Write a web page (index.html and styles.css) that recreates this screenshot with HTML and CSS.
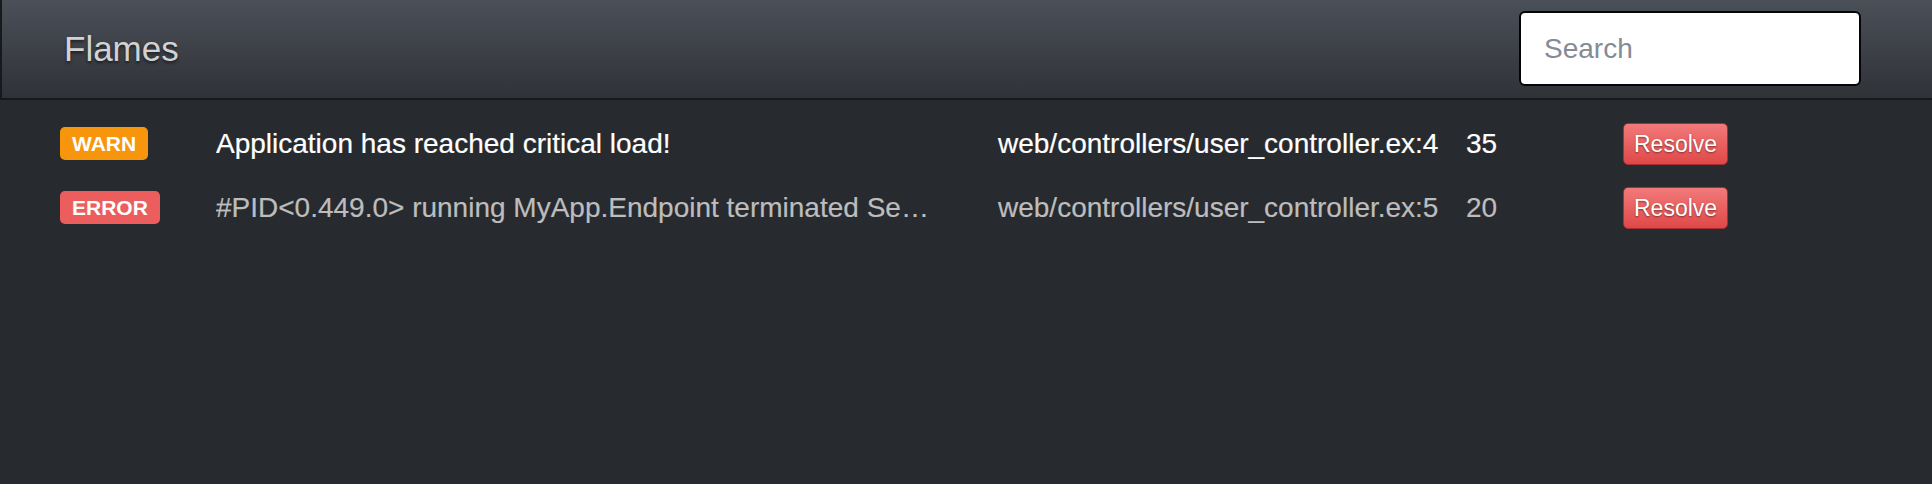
FILE: index.html
```html
<!DOCTYPE html>
<html>
<head>
<meta charset="utf-8">
<title>Flames</title>
<link rel="stylesheet" href="styles.css">
</head>
<body>
<header class="topbar">
  <div class="brand">Flames</div>
  <input class="search" type="text" placeholder="Search">
</header>
<main class="list">
  <div class="row row-active">
    <div class="cell"><span class="label label-warn">WARN</span></div>
    <div class="cell msg">Application has reached critical load!</div>
    <div class="cell">web/controllers/user_controller.ex:4</div>
    <div class="cell">35</div>
    <div class="cell"><button class="btn-resolve">Resolve</button></div>
  </div>
  <div class="row row-muted">
    <div class="cell"><span class="label label-error">ERROR</span></div>
    <div class="cell msg">#PID&lt;0.449.0&gt; running MyApp.Endpoint terminated Se…</div>
    <div class="cell">web/controllers/user_controller.ex:5</div>
    <div class="cell">20</div>
    <div class="cell"><button class="btn-resolve">Resolve</button></div>
  </div>
</main>
</body>
</html>
```
FILE: styles.css
```css
html, body {
  margin: 0;
  padding: 0;
  background: #272a2f;
  font-family: "Liberation Sans", Arial, Helvetica, sans-serif;
  height: 100%;
}

.topbar {
  height: 98px;
  display: flex;
  align-items: center;
  justify-content: space-between;
  background: linear-gradient(to bottom, #4b4f58 0%, #2f3237 100%);
  border-left: 2px solid #17191c;
  border-bottom: 2px solid #17191c;
  padding: 0 71px 0 62px;
}

.brand {
  font-size: 35px;
  color: #d2d2d2;
  text-shadow: 0 2px 3px rgba(0, 0, 0, 0.55);
  line-height: 1;
  margin-top: -2px;
}

.search {
  box-sizing: border-box;
  width: 342px;
  height: 75px;
  border: 2px solid #050505;
  border-radius: 6px;
  background: #fff;
  padding: 0 23px;
  font-family: "Liberation Sans", Arial, Helvetica, sans-serif;
  font-size: 28px;
  color: #333;
  outline: none;
  margin-bottom: 1px;
}

.search::placeholder {
  color: #858b92;
}

.list {
  padding: 12px 0 0 60px;
}

.row {
  display: grid;
  grid-template-columns: 156px 782px 468px 157px auto;
  align-items: center;
  height: 64px;
  font-size: 28px;
  -webkit-text-stroke: 0.2px currentColor;
}

.row-active {
  color: #ffffff;
}

.row-muted {
  color: #bdbdbd;
}

.cell {
  white-space: nowrap;
}

.msg {
  overflow: hidden;
}

.label {
  display: inline-block;
  font-size: 21px;
  font-weight: bold;
  color: #fff;
  line-height: 1;
  padding: 6px 12px 6px;
  border-radius: 5px;
  vertical-align: middle;
  margin-top: -4px;
  -webkit-text-stroke: 0;
}

.label-warn {
  background: #f7950c;
}

.label-error {
  background: #ec5e5e;
}

.btn-resolve {
  box-sizing: border-box;
  height: 42px;
  padding: 0 10px;
  font-family: "Liberation Sans", Arial, Helvetica, sans-serif;
  font-size: 23px;
  color: #fff;
  text-shadow: 0 1px 2px rgba(0, 0, 0, 0.45);
  background: linear-gradient(to bottom, #f27a7a 0%, #e04848 100%);
  border: 1px solid #a8302f;
  border-radius: 5px;
  line-height: 38px;
  cursor: pointer;
  -webkit-text-stroke: 0;
}
```
